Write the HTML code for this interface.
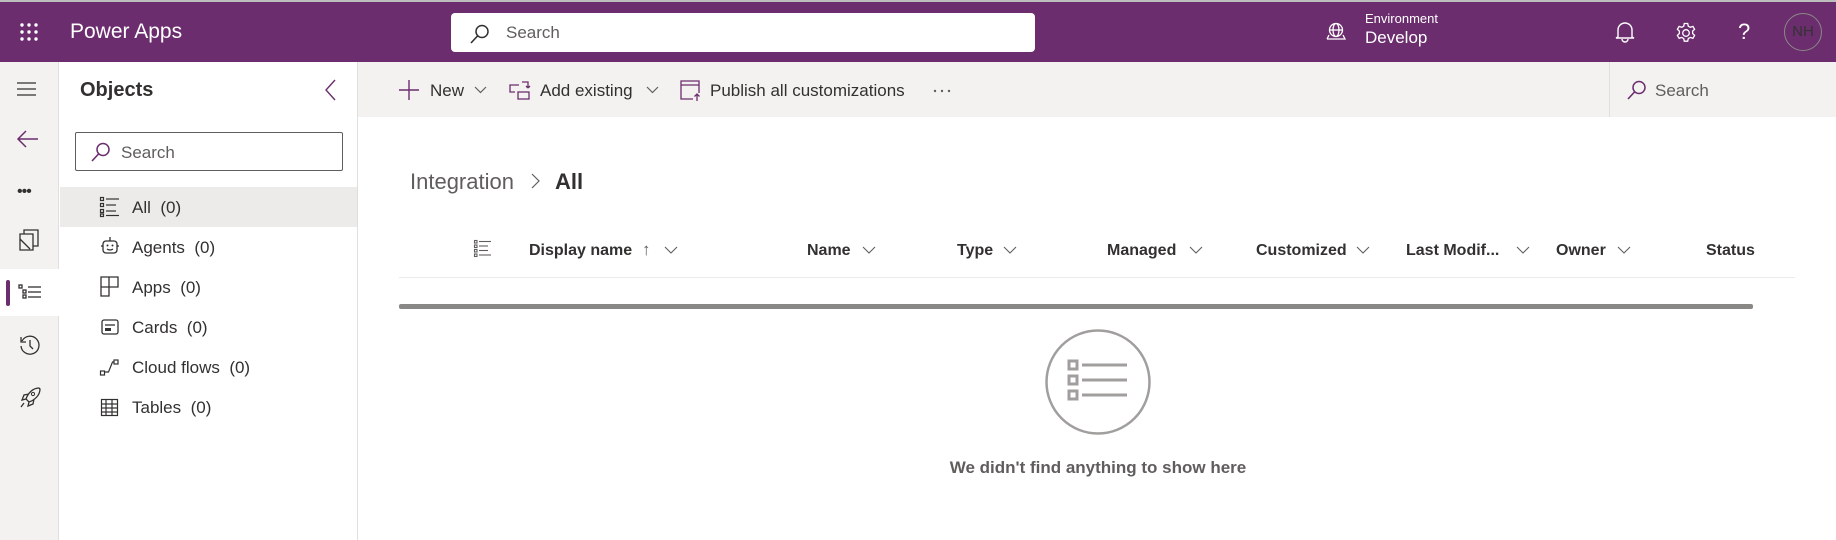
<!DOCTYPE html>
<html><head><meta charset="utf-8"><style>
*{margin:0;padding:0;box-sizing:border-box}
body{width:1836px;height:540px;overflow:hidden;background:#fff;font-family:"Liberation Sans",sans-serif;color:#323130;position:relative}
.a{position:absolute;white-space:nowrap}
svg{position:absolute;overflow:visible}
.hd{font-weight:bold;font-size:16px;color:#323130;top:242px}
.it{font-size:17px;color:#323130}
</style></head><body>
<div class="a" style="left:0;top:0;width:1836px;height:2px;background:#bdbdbd"></div>
<div class="a" style="left:0;top:2px;width:1836px;height:60px;background:#6b2d6e"></div>
<svg style="left:20px;top:23px" width="20" height="20"><g fill="#fff"><circle cx="2" cy="2" r="1.7"/><circle cx="9" cy="2" r="1.7"/><circle cx="16" cy="2" r="1.7"/><circle cx="2" cy="9" r="1.7"/><circle cx="9" cy="9" r="1.7"/><circle cx="16" cy="9" r="1.7"/><circle cx="2" cy="16" r="1.7"/><circle cx="9" cy="16" r="1.7"/><circle cx="16" cy="16" r="1.7"/></g></svg>
<div class="a" style="left:70px;top:20px;font-size:21px;color:#fff">Power Apps</div>
<div class="a" style="left:451px;top:13px;width:584px;height:39px;background:#fff;border-radius:4px"></div>
<svg style="left:470px;top:24px" width="20" height="20"><circle cx="12" cy="7.5" r="6" fill="none" stroke="#323130" stroke-width="1.5"/><line x1="7.5" y1="12" x2="1" y2="19" stroke="#323130" stroke-width="1.6"/></svg>
<div class="a" style="left:506px;top:23px;font-size:17px;color:#605e5c">Search</div>
<svg style="left:1325px;top:22px" width="22" height="20"><g fill="none" stroke="#fff" stroke-width="1.3"><circle cx="11" cy="8" r="6.5"/><ellipse cx="11" cy="8" rx="3" ry="6.5"/><line x1="4.5" y1="8" x2="17.5" y2="8"/><path d="M2 17h18l-2-4M2 17l2-4"/></g></svg>
<div class="a" style="left:1365px;top:11px;font-size:13px;color:#fff">Environment</div>
<div class="a" style="left:1365px;top:28px;font-size:17px;color:#fff">Develop</div>
<svg style="left:1615px;top:21px" width="20" height="22"><path d="M3 16V9a7 7 0 0 1 14 0v7l2 1H1z M7 18a3 3 0 0 0 6 0" fill="none" stroke="#fff" stroke-width="1.4"/></svg>
<svg style="left:1675px;top:22px" width="22" height="22"><g fill="none" stroke="#fff" stroke-width="1.3"><circle cx="11" cy="11" r="3.3"/><path d="M9.3 1.5h3.4l.6 2.7 2 1.1 2.6-.9 1.7 2.9-2 1.9v2.3l2 1.9-1.7 2.9-2.6-.9-2 1.1-.6 2.7H9.3l-.6-2.7-2-1.1-2.6.9-1.7-2.9 2-1.9V9.2l-2-1.9 1.7-2.9 2.6.9 2-1.1z"/></g></svg>
<div class="a" style="left:1738px;top:19px;font-size:22px;color:#fff">?</div>
<div class="a" style="left:1784px;top:13px;width:38px;height:38px;border-radius:50%;border:1.5px solid #8a8886;color:#333;font-size:15px;text-align:center;line-height:35px">NH</div>

<div class="a" style="left:0;top:62px;width:59px;height:478px;background:#f3f2f1;border-right:1px solid #e1dfdd"></div>
<svg style="left:17px;top:82px" width="20" height="14"><g stroke="#323130" stroke-width="1.3"><line x1="0" y1="1" x2="19" y2="1"/><line x1="0" y1="7" x2="19" y2="7"/><line x1="0" y1="13" x2="19" y2="13"/></g></svg>
<svg style="left:17px;top:130px" width="22" height="18"><path d="M21 9H2M9 1L1 9l8 8" fill="none" stroke="#6b2d6e" stroke-width="1.5"/></svg>
<div class="a" style="left:17px;top:183px;font-size:16px;color:#323130;letter-spacing:-1px">•••</div>
<svg style="left:19px;top:229px" width="20" height="22"><path d="M1 5h13v16H1z M5 5V1h14v16h-5 M1 10l10 10" fill="none" stroke="#323130" stroke-width="1.3"/></svg>
<div class="a" style="left:0;top:269px;width:59px;height:47px;background:#fff"></div>
<div class="a" style="left:6px;top:280px;width:4px;height:26px;background:#6b2d6e;border-radius:2px"></div>
<svg style="left:18px;top:284px" width="24" height="16"><g fill="none" stroke="#323130" stroke-width="1.3"><rect x="1" y="1" width="3" height="3"/><rect x="5" y="6" width="3" height="3"/><rect x="5" y="11" width="3" height="3"/><line x1="10" y1="3" x2="23" y2="3"/><line x1="10" y1="8" x2="23" y2="8"/><line x1="10" y1="13" x2="23" y2="13"/></g></svg>
<svg style="left:19px;top:334px" width="22" height="22"><path d="M3 7a9 9 0 1 1-1 5 M2 3v5h5 M11 6v6l3 3" fill="none" stroke="#323130" stroke-width="1.3"/></svg>
<svg style="left:19px;top:387px" width="22" height="22"><path d="M20 1c-6 0-11 5-13 11l3 3c6-2 11-7 11-13z M7 12l-4 1 2-5 5-1 M10 15l-1 4 5-2 1-5 M5 16l-3 4" fill="none" stroke="#323130" stroke-width="1.3"/><circle cx="14" cy="7" r="1.6" fill="none" stroke="#323130"/></svg>

<div class="a" style="left:357px;top:62px;width:1px;height:478px;background:#e1dfdd"></div>
<div class="a" style="left:80px;top:79px;font-size:20px;font-weight:bold;color:#323130">Objects</div>
<svg style="left:325px;top:79px" width="12" height="22"><path d="M10 1L1 11l9 10" fill="none" stroke="#6b2d6e" stroke-width="1.4"/></svg>
<div class="a" style="left:75px;top:132px;width:268px;height:39px;border:1px solid #605e5c;border-radius:2px"></div>
<svg style="left:91px;top:142px" width="20" height="20"><circle cx="12" cy="7.5" r="6" fill="none" stroke="#6b2d6e" stroke-width="1.5"/><line x1="7.5" y1="12" x2="1" y2="19" stroke="#6b2d6e" stroke-width="1.6"/></svg>
<div class="a" style="left:121px;top:143px;font-size:17px;color:#605e5c">Search</div>
<div class="a" style="left:60px;top:187px;width:297px;height:40px;background:#edebe9"></div>
<svg style="left:100px;top:197px" width="20" height="20"><g fill="none" stroke="#323130" stroke-width="1.2"><rect x="0.5" y="0.5" width="3" height="3"/><rect x="0.5" y="6.5" width="3" height="3"/><rect x="0.5" y="12.5" width="3" height="3"/><rect x="0.5" y="17" width="3" height="2.5"/><line x1="6" y1="2" x2="19" y2="2"/><line x1="6" y1="8" x2="16" y2="8"/><line x1="6" y1="14" x2="16" y2="14"/><line x1="6" y1="18.5" x2="19" y2="18.5"/></g></svg>
<div class="a it" style="left:132px;top:198px">All&nbsp; (0)</div>
<svg style="left:100px;top:236px" width="20" height="22"><g fill="none" stroke="#323130" stroke-width="1.3"><rect x="3" y="5" width="14" height="12" rx="3"/><line x1="10" y1="1" x2="10" y2="5"/><line x1="1" y1="10" x2="3" y2="10"/><line x1="17" y1="10" x2="19" y2="10"/><path d="M7 13q3 2 6 0"/></g><circle cx="7.5" cy="9.5" r="1" fill="#323130"/><circle cx="12.5" cy="9.5" r="1" fill="#323130"/></svg>
<div class="a it" style="left:132px;top:238px">Agents&nbsp; (0)</div>
<svg style="left:100px;top:276px" width="19" height="21"><path d="M1 1h17v10H1zM1 11v9h8V1" fill="none" stroke="#323130" stroke-width="1.3"/></svg>
<div class="a it" style="left:132px;top:278px">Apps&nbsp; (0)</div>
<svg style="left:101px;top:319px" width="18" height="16"><rect x="1" y="1" width="16" height="14" rx="2" fill="none" stroke="#323130" stroke-width="1.3"/><line x1="4" y1="6" x2="14" y2="6" stroke="#323130" stroke-width="1.3"/><rect x="4" y="9" width="6" height="3" fill="#323130"/></svg>
<div class="a it" style="left:132px;top:318px">Cards&nbsp; (0)</div>
<svg style="left:100px;top:359px" width="20" height="18"><g fill="none" stroke="#323130" stroke-width="1.2"><rect x="0.5" y="12" width="4" height="4"/><rect x="14" y="1" width="4" height="4"/><path d="M4.5 13l4 0 4-10 1.5 0"/></g></svg>
<div class="a it" style="left:132px;top:358px">Cloud flows&nbsp; (0)</div>
<svg style="left:101px;top:399px" width="18" height="18"><g fill="none" stroke="#323130" stroke-width="1.2"><rect x="0.5" y="0.5" width="16" height="16"/><line x1="0.5" y1="5" x2="16.5" y2="5"/><line x1="0.5" y1="9" x2="16.5" y2="9"/><line x1="0.5" y1="13" x2="16.5" y2="13"/><line x1="5" y1="0.5" x2="5" y2="16.5"/><line x1="11" y1="0.5" x2="11" y2="16.5"/></g></svg>
<div class="a it" style="left:132px;top:398px">Tables&nbsp; (0)</div>

<div class="a" style="left:358px;top:62px;width:1478px;height:55px;background:#f3f2f1"></div>
<div class="a" style="left:1609px;top:62px;width:1px;height:55px;background:#e1dfdd"></div>
<svg style="left:399px;top:80px" width="20" height="20"><path d="M10 0v20M0 10h20" stroke="#6b2d6e" stroke-width="1.4"/></svg>
<div class="a" style="left:430px;top:81px;font-size:17px">New</div>
<svg style="left:474px;top:86px" width="13" height="8"><path d="M1 1l5.5 5.5L12 1" fill="none" stroke="#605e5c" stroke-width="1.2"/></svg>
<svg style="left:509px;top:79px" width="22" height="22"><g fill="none" stroke="#6b2d6e" stroke-width="1.3"><path d="M10 6H1v7h5"/><rect x="9" y="13" width="11" height="7"/><path d="M13 3h6v6M19 9l-2-2M19 9l2-2"/></g></svg>
<div class="a" style="left:540px;top:81px;font-size:17px">Add existing</div>
<svg style="left:646px;top:86px" width="13" height="8"><path d="M1 1l5.5 5.5L12 1" fill="none" stroke="#605e5c" stroke-width="1.2"/></svg>
<svg style="left:680px;top:80px" width="22" height="22"><g fill="none" stroke="#6b2d6e" stroke-width="1.3"><path d="M13 19H1V1h18v12"/><line x1="1" y1="5" x2="19" y2="5"/><path d="M17 21v-7M14.5 16.5L17 14l2.5 2.5"/></g></svg>
<div class="a" style="left:710px;top:81px;font-size:17px">Publish all customizations</div>
<svg style="left:933px;top:89px" width="20" height="4"><g fill="#605e5c"><circle cx="2" cy="2" r="1.2"/><circle cx="9" cy="2" r="1.2"/><circle cx="16" cy="2" r="1.2"/></g></svg>
<svg style="left:1627px;top:80px" width="20" height="20"><circle cx="12" cy="7.5" r="6" fill="none" stroke="#6b2d6e" stroke-width="1.5"/><line x1="7.5" y1="12" x2="1" y2="19" stroke="#6b2d6e" stroke-width="1.6"/></svg>
<div class="a" style="left:1655px;top:81px;font-size:17px;color:#605e5c">Search</div>

<div class="a" style="left:410px;top:169px;font-size:22px;color:#605e5c">Integration</div>
<svg style="left:531px;top:173px" width="10" height="16"><path d="M1 1l7 7-7 7" fill="none" stroke="#605e5c" stroke-width="1.2"/></svg>
<div class="a" style="left:555px;top:169px;font-size:22px;font-weight:bold;color:#323130">All</div>
<svg style="left:474px;top:240px" width="18" height="18"><g fill="none" stroke="#605e5c" stroke-width="1.1"><rect x="0.5" y="0.5" width="2.5" height="2.5"/><rect x="0.5" y="5" width="2.5" height="2.5"/><rect x="0.5" y="9.5" width="2.5" height="2.5"/><rect x="0.5" y="14" width="2.5" height="2.5"/><line x1="5" y1="1.5" x2="17" y2="1.5"/><line x1="5" y1="6" x2="14" y2="6"/><line x1="5" y1="10.5" x2="14" y2="10.5"/><line x1="5" y1="15" x2="17" y2="15"/></g></svg>
<div class="a hd" style="left:529px">Display name</div>
<div class="a" style="left:642px;top:240px;font-size:17px;color:#605e5c">↑</div>
<svg style="left:664px;top:246px" width="14" height="8"><path d="M1 1l6 6 6-6" fill="none" stroke="#605e5c" stroke-width="1.1"/></svg>
<div class="a hd" style="left:807px">Name</div>
<svg style="left:862px;top:246px" width="14" height="8"><path d="M1 1l6 6 6-6" fill="none" stroke="#605e5c" stroke-width="1.1"/></svg>
<div class="a hd" style="left:957px">Type</div>
<svg style="left:1003px;top:246px" width="14" height="8"><path d="M1 1l6 6 6-6" fill="none" stroke="#605e5c" stroke-width="1.1"/></svg>
<div class="a hd" style="left:1107px">Managed</div>
<svg style="left:1189px;top:246px" width="14" height="8"><path d="M1 1l6 6 6-6" fill="none" stroke="#605e5c" stroke-width="1.1"/></svg>
<div class="a hd" style="left:1256px">Customized</div>
<svg style="left:1356px;top:246px" width="14" height="8"><path d="M1 1l6 6 6-6" fill="none" stroke="#605e5c" stroke-width="1.1"/></svg>
<div class="a hd" style="left:1406px">Last Modif...</div>
<svg style="left:1516px;top:246px" width="14" height="8"><path d="M1 1l6 6 6-6" fill="none" stroke="#605e5c" stroke-width="1.1"/></svg>
<div class="a hd" style="left:1556px">Owner</div>
<svg style="left:1617px;top:246px" width="14" height="8"><path d="M1 1l6 6 6-6" fill="none" stroke="#605e5c" stroke-width="1.1"/></svg>
<div class="a hd" style="left:1706px">Status</div>
<div class="a" style="left:399px;top:277px;width:1396px;height:1px;background:#edebe9"></div>
<div class="a" style="left:399px;top:304px;width:1354px;height:5px;background:#8a8886;border-radius:2px"></div>
<svg style="left:1045px;top:329px" width="106" height="106"><circle cx="53" cy="53" r="51.5" fill="none" stroke="#a19f9d" stroke-width="2.5"/><g fill="none" stroke="#a19f9d"><rect x="24" y="32" width="8" height="8" stroke-width="3"/><rect x="24" y="47" width="8" height="8" stroke-width="3"/><rect x="24" y="62" width="8" height="8" stroke-width="3"/><line x1="37" y1="36" x2="82" y2="36" stroke-width="3"/><line x1="37" y1="51" x2="82" y2="51" stroke-width="3"/><line x1="37" y1="66" x2="82" y2="66" stroke-width="3"/></g></svg>
<div class="a" style="left:898px;top:458px;width:400px;text-align:center;font-size:17px;font-weight:bold;color:#605e5c">We didn't find anything to show here</div>
</body></html>
